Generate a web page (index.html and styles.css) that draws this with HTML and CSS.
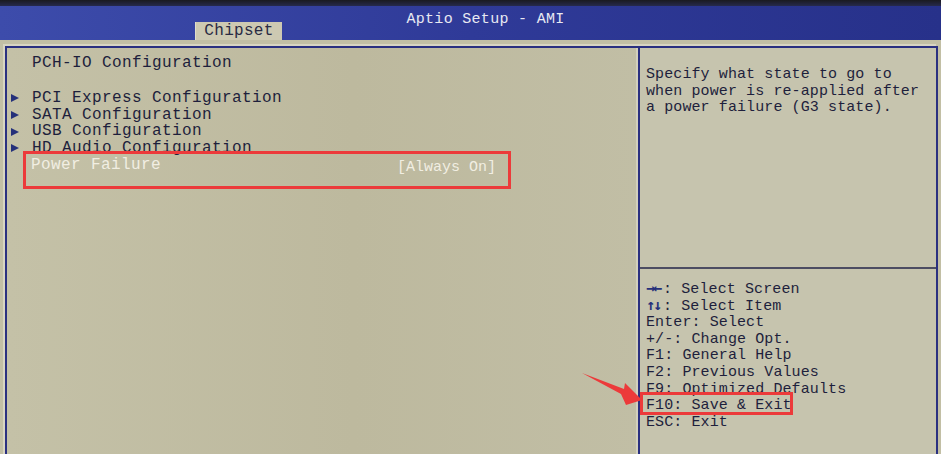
FILE: index.html
```html
<!DOCTYPE html>
<html lang="en">
<head>
  <meta charset="UTF-8" />
  <meta name="viewport" content="width=device-width, initial-scale=1.0" />
  <title>Aptio Setup - AMI</title>
  <link rel="stylesheet" href="styles.css">
</head>
<body>
  <div class="bezel"></div>
  <header class="topbar">
    <div class="title">Aptio Setup - AMI</div>
    <div class="tab">Chipset</div>
  </header>

  <div class="frame">
    <section class="main-panel">
      <div class="row heading">PCH-IO Configuration</div>
      <div class="row"><span class="arrow"></span>PCI Express Configuration</div>
      <div class="row"><span class="arrow"></span>SATA Configuration</div>
      <div class="row"><span class="arrow"></span>USB Configuration</div>
      <div class="row"><span class="arrow"></span>HD Audio Configuration</div>
      <div class="row setting selected">
        <span class="label">Power Failure</span>
        <span class="value">[Always On]</span>
      </div>
    </section>

    <aside class="side-panel">
      <div class="help">
        <div>Specify what state to go to</div>
        <div>when power is re-applied after</div>
        <div>a power failure (G3 state).</div>
      </div>
      <div class="keys">
        <div><b class="key-arrows">&rarr;&larr;</b>: Select Screen</div>
        <div><b class="key-arrows">&uarr;&darr;</b>: Select Item</div>
        <div>Enter: Select</div>
        <div>+/-: Change Opt.</div>
        <div>F1: General Help</div>
        <div>F2: Previous Values</div>
        <div>F9: Optimized Defaults</div>
        <div>F10: Save &amp; Exit</div>
        <div>ESC: Exit</div>
      </div>
    </aside>
  </div>

  <!-- annotations drawn on top of the screenshot -->
  <div class="mark mark-setting"></div>
  <div class="mark mark-save"></div>
  <svg class="pointer" width="941" height="454" viewBox="0 0 941 454">
    <polygon points="582,373 624,389 625,383 642,400 626,405 621,394" fill="#ec3a3a" />
  </svg>
</body>
</html>
```

FILE: styles.css
```css
body {
  margin: 0;
  width: 941px;
  height: 454px;
  overflow: hidden;
  position: relative;
  background: #c2bfa5;
  font-family: "Liberation Mono", "DejaVu Sans Mono", monospace;
  color: #1e1f3c;
}
.bezel {
  height: 6px;
  background: linear-gradient(#1a1a20, #262a4c);
}
.topbar {
  height: 34px;
  display: grid;
  background: linear-gradient(90deg, #3d4cab, #2f3a98 50%, #27318a);
}
.title {
  grid-area: 1 / 1;
  align-self: start;
  padding: 6px 0 0 30px;
  text-align: center;
  font-size: 15px;
  line-height: 16px;
  letter-spacing: 0.3px;
  color: #e8e9f2;
}
.tab {
  grid-area: 1 / 1;
  align-self: end;
  justify-self: start;
  margin-left: 195px;
  width: 87px;
  height: 18px;
  box-sizing: border-box;
  background: #cdc9b2;
  border-left: 1px solid #e0ddcb;
  text-align: center;
  font-size: 16px;
  line-height: 19px;
  letter-spacing: 0.3px;
  color: #2a2b44;
}
.frame {
  display: flex;
  margin: 6px 3px 0 5px;
  height: 420px;
  border-top: 2px solid #2a3080;
  border-left: 2px solid #2a3080;
  box-shadow: -2px -2px 0 #d8d5c2;
}
.main-panel {
  width: 631px;
  padding-top: 7px;
  font-size: 16px;
  line-height: 16.75px;
  letter-spacing: 0.4px;
  background: linear-gradient(90deg, #c4c1a7, #bdb99e 55%, #c1bea5);
}
.row {
  display: flex;
  align-items: center;
  padding-left: 25px;
  white-space: nowrap;
}
.heading {
  margin-bottom: 18px;
}
.arrow {
  margin-left: -21px;
  margin-right: 13px;
  width: 0;
  height: 0;
  border-left: 8px solid #25307a;
  border-top: 4.5px solid transparent;
  border-bottom: 4.5px solid transparent;
}
.setting {
  align-items: flex-start;
}
.setting .label {
  width: 366px;
}
.setting .value {
  padding-top: 3px;
  font-size: 15px;
  letter-spacing: 0;
}
.selected {
  color: #f1eee2;
  padding-left: 24px;
}
.side-panel {
  width: 300px;
  box-sizing: border-box;
  border-left: 2px solid #2a3080;
  border-right: 2px solid #2a3080;
  box-shadow: -2px 0 0 #d3d0bd;
  background: #c6c4ae;
  font-size: 15px;
  letter-spacing: 0.1px;
  white-space: nowrap;
}
.help {
  height: 221px;
  box-sizing: border-box;
  padding: 19px 0 0 6px;
  line-height: 16.6px;
  border-bottom: 2px solid #4c4d62;
}
.keys {
  padding: 13px 0 0 6px;
  line-height: 16.6px;
}
.key-arrows {
  font-family: "DejaVu Sans Mono", monospace;
  font-size: 15px;
  line-height: 0;
  color: #25307a;
  letter-spacing: -2px;
  margin-right: 3px;
}
.mark {
  position: absolute;
  box-sizing: border-box;
  border: 3px solid #ec3a3a;
}
.mark-setting {
  left: 23px;
  top: 151px;
  width: 488px;
  height: 38px;
}
.mark-save {
  left: 640px;
  top: 392px;
  width: 153px;
  height: 23px;
}
.pointer {
  position: absolute;
  left: 0;
  top: 0;
  pointer-events: none;
}
```
